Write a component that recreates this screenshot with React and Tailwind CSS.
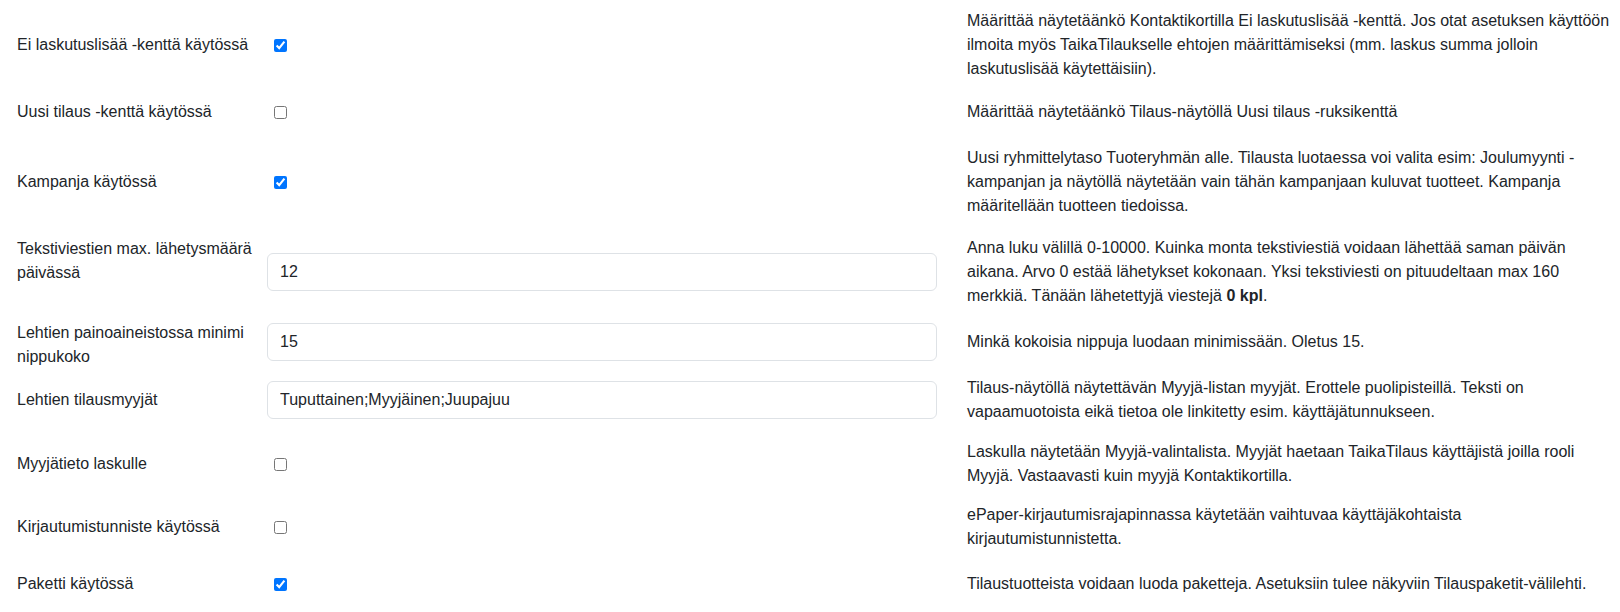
import React from "react";

const rows = [
  {
    label: "Ei laskutuslisää -kenttä käytössä",
    type: "checkbox",
    checked: true,
    h: "h-[90px]",
    desc: "Määrittää näytetäänkö Kontaktikortilla Ei laskutuslisää -kenttä. Jos otat asetuksen käyttöön ilmoita myös TaikaTilaukselle ehtojen määrittämiseksi (mm. laskus summa jolloin laskutuslisää käytettäisiin).",
  },
  {
    label: "Uusi tilaus -kenttä käytössä",
    type: "checkbox",
    checked: false,
    h: "h-[44px]",
    desc: "Määrittää näytetäänkö Tilaus-näytöllä Uusi tilaus -ruksikenttä",
  },
  {
    label: "Kampanja käytössä",
    type: "checkbox",
    checked: true,
    h: "h-[96px]",
    desc: "Uusi ryhmittelytaso Tuoteryhmän alle. Tilausta luotaessa voi valita esim: Joulumyynti -kampanjan ja näytöllä näytetään vain tähän kampanjaan kuluvat tuotteet. Kampanja määritellään tuotteen tiedoissa.",
  },
  {
    label: "Tekstiviestien max. lähetysmäärä päivässä",
    type: "text",
    value: "12",
    h: "h-[84px]",
    top: true,
    desc: (
      <>
        Anna luku välillä 0-10000. Kuinka monta tekstiviestiä voidaan lähettää saman päivän aikana. Arvo 0 estää
        lähetykset kokonaan. Yksi tekstiviesti on pituudeltaan max 160 merkkiä. Tänään lähetettyjä viestejä{" "}
        <b className="font-bold">0 kpl</b>.
      </>
    ),
  },
  {
    label: "Lehtien painoaineistossa minimi nippukoko",
    type: "text",
    value: "15",
    h: "h-[56px]",
    top: true,
    desc: "Minkä kokoisia nippuja luodaan minimissään. Oletus 15.",
  },
  {
    label: "Lehtien tilausmyyjät",
    type: "text",
    value: "Tuputtainen;Myyjäinen;Juupajuu",
    h: "h-[60px]",
    desc: "Tilaus-näytöllä näytettävän Myyjä-listan myyjät. Erottele puolipisteillä. Teksti on vapaamuotoista eikä tietoa ole linkitetty esim. käyttäjätunnukseen.",
  },
  {
    label: "Myyjätieto laskulle",
    type: "checkbox",
    checked: false,
    h: "h-[68px]",
    desc: "Laskulla näytetään Myyjä-valintalista. Myyjät haetaan TaikaTilaus käyttäjistä joilla rooli Myyjä. Vastaavasti kuin myyjä Kontaktikortilla.",
  },
  {
    label: "Kirjautumistunniste käytössä",
    type: "checkbox",
    checked: false,
    h: "h-[58px]",
    desc: "ePaper-kirjautumisrajapinnassa käytetään vaihtuvaa käyttäjäkohtaista kirjautumistunnistetta.",
  },
  {
    label: "Paketti käytössä",
    type: "checkbox",
    checked: true,
    h: "h-[56px]",
    desc: "Tilaustuotteista voidaan luoda paketteja. Asetuksiin tulee näkyviin Tilauspaketit-välilehti.",
  },
];

const SettingRow = ({ row }) => (
  <div className={`grid grid-cols-[250px_670px_1fr] items-center ${row.h}`}>
    <label className={`pr-3 ${row.top ? "self-start pt-[7px]" : ""}`}>{row.label}</label>
    <div>
      {row.type === "checkbox" ? (
        <input type="checkbox" defaultChecked={row.checked} className="m-0 ml-[7px] w-[13px] h-[13px] align-middle" />
      ) : (
        <input
          type="text"
          defaultValue={row.value}
          className="w-full h-[38px] px-3 border border-[#dee2e6] rounded-md bg-white text-[#212529] outline-none"
        />
      )}
    </div>
    <div className="pl-[30px]">{row.desc}</div>
  </div>
);

export default function App() {
  return (
    <div
      className="min-h-screen bg-white pl-[17px] pr-[4px] text-[16px] leading-6 text-[#212529]"
      style={{ fontFamily: '"Liberation Sans", Arial, sans-serif' }}
    >
      {rows.map((row, i) => (
        <SettingRow key={i} row={row} />
      ))}
    </div>
  );
}
